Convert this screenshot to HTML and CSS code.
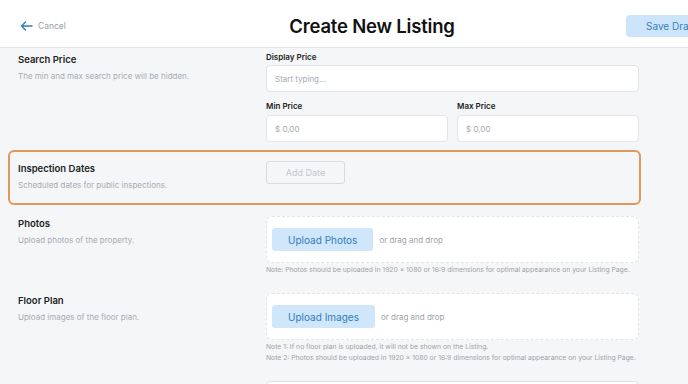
FILE: index.html
```html
<html>
<head>
    <link rel="stylesheet" href="styles.css">
</head>

<body>

<div class="header">
    <a class="cancel" href="#">
        <svg width="13" height="10" viewBox="0 0 13 10">
            <path d="M12 5H1.5M5.5 1L1.5 5L5.5 9" fill="none" stroke="#2f7db6" stroke-width="1.4" stroke-linecap="round" stroke-linejoin="round"/>
        </svg>
        Cancel
    </a>
    <h1>Create New Listing</h1>
    <div class="actions">
        <button class="save">Save Draft</button>
    </div>
</div>

<div class="form">

    <div class="section first">
        <div class="info">
            <div class="title">Search Price</div>
            <div class="desc">The min and max search price will be hidden.</div>
        </div>
        <div class="fields">
            <label for="displayPrice">Display Price</label>
            <input type="text" id="displayPrice" placeholder="Start typing...">
            <div class="row">
                <div>
                    <label for="minPrice">Min Price</label>
                    <input type="text" id="minPrice" placeholder="$ 0,00">
                </div>
                <div>
                    <label for="maxPrice">Max Price</label>
                    <input type="text" id="maxPrice" placeholder="$ 0,00">
                </div>
            </div>
        </div>
    </div>

    <div class="section active">
        <div class="info">
            <div class="title">Inspection Dates</div>
            <div class="desc">Scheduled dates for public inspections.</div>
        </div>
        <div class="fields">
            <button class="add-date" disabled>Add Date</button>
        </div>
    </div>

    <div class="section">
        <div class="info">
            <div class="title">Photos</div>
            <div class="desc">Upload photos of the property.</div>
        </div>
        <div class="fields">
            <div class="upload">
                <button class="upload-btn">Upload Photos</button>
                <span class="drag">or drag and drop</span>
            </div>
            <p class="note">Note: Photos should be uploaded in 1920 x 1080 or 16:9 dimensions for optimal appearance on your Listing Page.</p>
        </div>
    </div>

    <div class="section">
        <div class="info">
            <div class="title">Floor Plan</div>
            <div class="desc">Upload images of the floor plan.</div>
        </div>
        <div class="fields">
            <div class="upload">
                <button class="upload-btn">Upload Images</button>
                <span class="drag">or drag and drop</span>
            </div>
            <p class="note">Note 1: If no floor plan is uploaded, it will not be shown on the Listing.</p>
            <p class="note">Note 2: Photos should be uploaded in 1920 x 1080 or 16:9 dimensions for optimal appearance on your Listing Page.</p>
        </div>
    </div>

    <div class="section">
        <div class="info"></div>
        <div class="fields">
            <div class="box"></div>
        </div>
    </div>

</div>

</body>
</html>
```

FILE: styles.css
```css
body {
    font-family: Inter, "Noto Sans", sans-serif;
    background-color: #f5f6f8;
    margin: 0;
    padding: 0;
    overflow: hidden;
}

.header {
    width: 724px;
    height: 48px;
    box-sizing: border-box;
    padding: 0 0 0 20px;
    background-color: #fff;
    border-bottom: 1px solid #e3e5e9;
    display: grid;
    grid-template-columns: 1fr auto 1fr;
    align-items: center;
}

.cancel {
    display: flex;
    align-items: center;
    gap: 5px;
    font-size: 8.5px;
    color: #9a9ea5;
    text-decoration: none;
    padding-top: 4px;
}

.header h1 {
    margin: 0;
    font-size: 18.5px;
    font-weight: 600;
    color: #111;
    letter-spacing: -0.2px;
    padding-top: 4px;
}

.actions {
    display: flex;
    justify-content: flex-end;
    padding-top: 4px;
}

.save {
    width: 98px;
    height: 22px;
    border: none;
    border-radius: 4px;
    background-color: #cde5fa;
    color: #3a80bf;
    font-family: inherit;
    font-size: 10px;
    text-align: left;
    padding-left: 20px;
}

.form {
    width: 633px;
    margin-left: 8px;
}

.section {
    display: grid;
    grid-template-columns: 248px 1fr;
    border: 2px solid transparent;
    border-radius: 6px;
    padding: 9px 0 5px 8px;
}

.section .info {
    padding-top: 1px;
}

.section.first {
    padding-top: 1px;
    padding-bottom: 6px;
}

.section.first .info {
    padding-top: 2px;
}

.section.active {
    border-color: #e0995c;
    padding-bottom: 12px;
}

.title {
    font-size: 9.5px;
    font-weight: 600;
    color: #222;
    line-height: 14px;
}

.desc {
    font-size: 8px;
    color: #a7abb1;
    line-height: 12px;
    margin-top: 3px;
}

label {
    display: block;
    font-size: 8px;
    font-weight: 600;
    color: #222;
    line-height: 12px;
    margin-bottom: 2px;
}

.row label {
    margin-bottom: 3px;
}

input[type="text"] {
    display: block;
    width: 100%;
    height: 27px;
    padding: 0 8px;
    font-family: inherit;
    font-size: 8px;
    border: 1px solid #e1e4e8;
    border-radius: 4px;
    background-color: #fff;
    box-sizing: border-box;
    margin-bottom: 8px;
}

input::placeholder {
    color: #a5a9b0;
}

.row {
    display: grid;
    grid-template-columns: 1fr 1fr;
    gap: 9px;
}

.row input[type="text"] {
    margin-bottom: 0;
}

.add-date {
    width: 79px;
    height: 23px;
    border: 1px solid #d8dbe0;
    border-radius: 3px;
    background-color: transparent;
    color: #c4c7cc;
    font-family: inherit;
    font-size: 9px;
}

.upload {
    height: 47px;
    box-sizing: border-box;
    background-color: #fff;
    border: 1px dashed #e2e4e8;
    border-radius: 6px;
    display: flex;
    align-items: center;
    gap: 6px;
    padding-left: 5px;
}

.upload-btn {
    height: 23px;
    padding: 0 16px;
    border: none;
    border-radius: 3px;
    background-color: #cfe6fb;
    color: #2f7dbd;
    font-family: inherit;
    font-size: 10px;
}

.drag {
    font-size: 8px;
    color: #9ea2a9;
}

.note {
    margin: 1px 0 0;
    font-size: 6.8px;
    line-height: 11px;
    color: #9ea2a9;
}

.note + .note {
    margin-top: 0;
}

.box {
    height: 40px;
    background-color: #fff;
    border: 1px solid #e0e2e6;
    border-radius: 4px;
}
```
